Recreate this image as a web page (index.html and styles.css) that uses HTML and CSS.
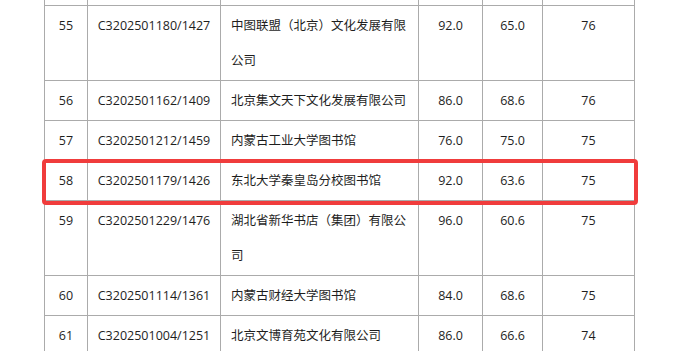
FILE: index.html
```html
<!DOCTYPE html>
<html lang="zh-CN">
<head>
<meta charset="utf-8">
<title>名单</title>
<link rel="stylesheet" href="styles.css">
</head>
<body>
<div class="wrap">
  <table class="list">
    <colgroup>
      <col class="c-no"><col class="c-code"><col class="c-name"><col class="c-a"><col class="c-b"><col class="c-c">
    </colgroup>
    <tbody>
      <tr class="stub"><td></td><td></td><td></td><td></td><td></td><td></td></tr>
      <tr><td>55</td><td>C3202501180/1427</td><td class="name">中图联盟（北京）文化发展有限公司</td><td>92.0</td><td>65.0</td><td>76</td></tr>
      <tr><td>56</td><td>C3202501162/1409</td><td class="name">北京集文天下文化发展有限公司</td><td>86.0</td><td>68.6</td><td>76</td></tr>
      <tr><td>57</td><td>C3202501212/1459</td><td class="name">内蒙古工业大学图书馆</td><td>76.0</td><td>75.0</td><td>75</td></tr>
      <tr><td>58</td><td>C3202501179/1426</td><td class="name">东北大学秦皇岛分校图书馆</td><td>92.0</td><td>63.6</td><td>75</td></tr>
      <tr><td>59</td><td>C3202501229/1476</td><td class="name">湖北省新华书店（集团）有限公司</td><td>96.0</td><td>60.6</td><td>75</td></tr>
      <tr><td>60</td><td>C3202501114/1361</td><td class="name">内蒙古财经大学图书馆</td><td>84.0</td><td>68.6</td><td>75</td></tr>
      <tr><td>61</td><td>C3202501004/1251</td><td class="name">北京文博育苑文化有限公司</td><td>86.0</td><td>66.6</td><td>74</td></tr>
    </tbody>
  </table>
  <div class="highlight"></div>
</div>
</body>
</html>
```
FILE: styles.css
```css
html, body {
  margin: 0;
  padding: 0;
  background: #ffffff;
}
body {
  font-family: "Open Sans", "Noto Sans CJK SC", sans-serif;
  font-size: 12.5px;
  color: #1e1e1e;
  overflow: hidden;
}
.wrap {
  position: relative;
  padding-left: 44px;
}
.list {
  border-collapse: collapse;
  table-layout: fixed;
  width: 591px;
}
.c-no { width: 43px; }
.c-code { width: 133px; }
.c-name { width: 198px; }
.c-a { width: 64px; }
.c-b { width: 60px; }
.c-c { width: 92px; }
.list td {
  border: 1px solid #ababab;
  padding: 2px 0;
  line-height: 35px;
  text-align: center;
  vertical-align: top;
}
.list td.name {
  text-align: left;
  padding: 2px 10px;
}
.list tr.stub td {
  border-top: none;
  height: 5px;
  padding: 0;
  line-height: 5px;
}
.highlight {
  position: absolute;
  left: 42px;
  top: 159px;
  width: 588px;
  height: 38px;
  border: 4px solid #f03c3c;
  border-radius: 4px;
  pointer-events: none;
}
```
